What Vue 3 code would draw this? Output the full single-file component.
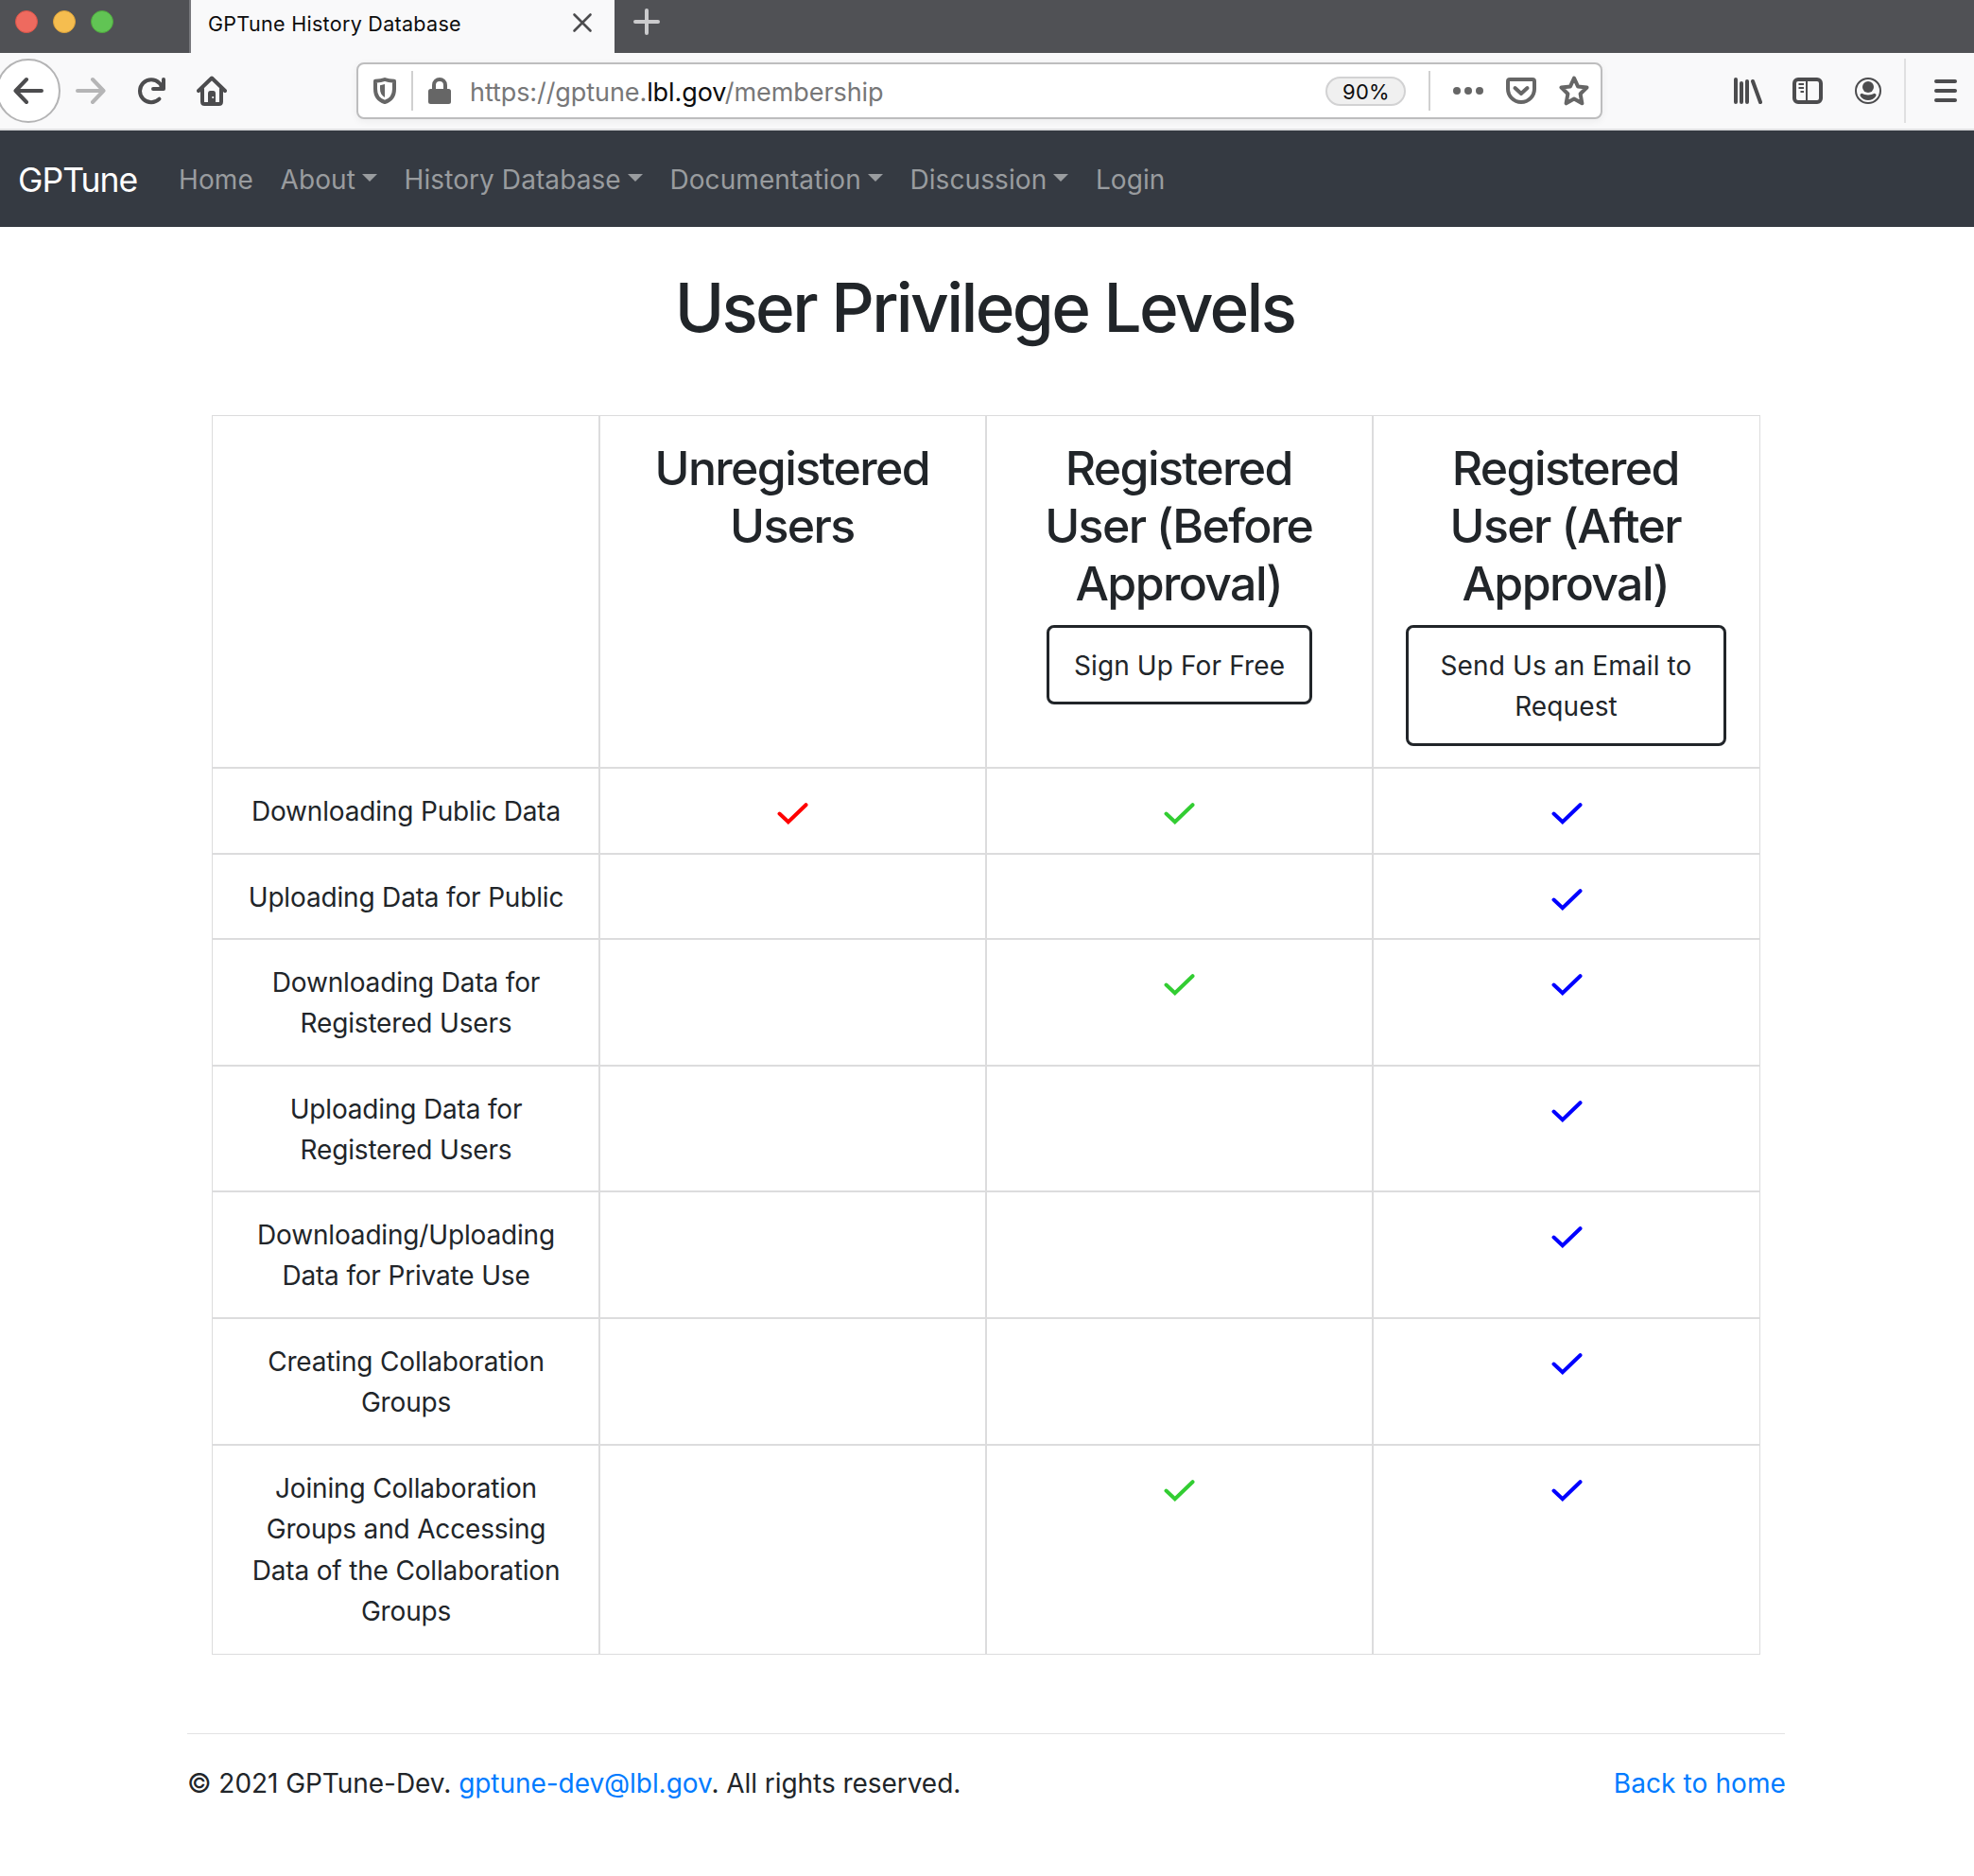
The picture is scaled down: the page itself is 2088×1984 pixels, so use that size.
<script setup>
const navItems = [
  { label: 'Home' },
  { label: 'About', menu: true },
  { label: 'History Database', menu: true },
  { label: 'Documentation', menu: true },
  { label: 'Discussion', menu: true },
  { label: 'Login' },
]

const levels = [
  { lines: ['Unregistered', 'Users'] },
  { lines: ['Registered', 'User (Before', 'Approval)'], action: ['Sign Up For Free'] },
  { lines: ['Registered', 'User (After', 'Approval)'], action: ['Send Us an Email to', 'Request'] },
]

const checkColors = ['#ff0000', '#32cd32', '#0000ff']

const privileges = [
  { lines: ['Downloading Public Data'], allowed: [true, true, true] },
  { lines: ['Uploading Data for Public'], allowed: [false, false, true] },
  { lines: ['Downloading Data for', 'Registered Users'], allowed: [false, true, true] },
  { lines: ['Uploading Data for', 'Registered Users'], allowed: [false, false, true] },
  { lines: ['Downloading/Uploading', 'Data for Private Use'], allowed: [false, false, true] },
  { lines: ['Creating Collaboration', 'Groups'], allowed: [false, false, true] },
  {
    lines: ['Joining Collaboration', 'Groups and Accessing', 'Data of the Collaboration', 'Groups'],
    allowed: [false, true, true],
  },
]
</script>

<template>
  <div class="window">
    <header class="tabbar">
      <div class="lights">
        <i class="light red"></i>
        <i class="light yellow"></i>
        <i class="light green"></i>
      </div>
      <div class="tab">
        <span class="tab-title">GPTune History Database</span>
        <svg class="tab-close" width="22" height="22" viewBox="0 0 22 22">
          <path d="M2.5 2.5 19.5 19.5M19.5 2.5 2.5 19.5" stroke="#4c4c4e" stroke-width="2.6" stroke-linecap="round" />
        </svg>
      </div>
      <svg class="tab-new" width="28" height="28" viewBox="0 0 28 28">
        <path d="M14 2V26M2 14H26" stroke="#cbcbcd" stroke-width="4" stroke-linecap="round" />
      </svg>
    </header>

    <div class="toolbar">
      <div class="back">
        <svg width="32" height="32" viewBox="0 0 32 32" fill="none" stroke="#4c4c4e" stroke-width="4" stroke-linecap="round" stroke-linejoin="round">
          <path d="M30 16H2.5M14 4 2.5 16 14 28" />
        </svg>
      </div>
      <svg class="forward" width="32" height="32" viewBox="0 0 32 32" fill="none" stroke="#b5b5b6" stroke-width="4" stroke-linecap="round" stroke-linejoin="round">
        <path d="M2 16H29.5M18 4 29.5 16 18 28" />
      </svg>
      <svg class="reload" width="32" height="32" viewBox="0 0 32 32" fill="none" stroke="#4c4c4e" stroke-width="4" stroke-linecap="round" stroke-linejoin="round">
        <path d="M24.5 24.7A12 12 0 1 1 24.5 7.8L28 12" />
        <path d="M29 4V14H18" />
        <path d="M29 7V14H22Z" fill="#4c4c4e" stroke="none" />
      </svg>
      <svg class="home" width="32" height="32" viewBox="0 0 32 32" fill="none" stroke="#4c4c4e" stroke-width="4" stroke-linecap="round" stroke-linejoin="round">
        <path d="M2 16 16 2.5 30 16" />
        <path d="M6 14V27.5Q6 30 8.500 30H23.500Q26 30 26 27.5V14" />
        <path d="M12 30V19Q12 16 14.500 16H17.500Q20 16 20 19V30Z" fill="#4c4c4e" stroke="none" />
        <circle cx="17.200" cy="23" r="1.100" fill="#f9f9fa" stroke="none" />
      </svg>

      <div class="urlbar">
        <svg class="shield" width="24" height="28" viewBox="0 0 24 28" fill="none">
          <path d="M12 2C15 3.200 18.500 3.600 22 3.800V12C22 19 18.500 24 12 26C5.500 24 2 19 2 12V3.800C5.500 3.600 9 3.200 12 2Z" stroke="#666" stroke-width="4" stroke-linejoin="round" />
          <path d="M12 7V21C8.500 19 7 16 7 12V8.200Z" fill="#666" />
        </svg>
        <i class="divider first"></i>
        <svg class="lock" width="24" height="28" viewBox="0 0 24 28" fill="none">
          <path d="M6 14V8A6 6 0 0 1 18 8V14" stroke="#666" stroke-width="4" />
          <rect y="12" width="24" height="16" rx="2.500" fill="#666" />
        </svg>
        <span class="url">https://gptune.<b>lbl.gov</b>/membership</span>
        <span class="zoom">90%</span>
        <i class="divider second"></i>
        <svg class="dots" width="32" height="8" viewBox="0 0 32 8" fill="#666">
          <circle cx="4" cy="4" r="4" /><circle cx="16" cy="4" r="4" /><circle cx="28" cy="4" r="4" />
        </svg>
        <svg class="pocket" width="32" height="28" viewBox="0 0 32 28" fill="none" stroke="#666" stroke-width="4" stroke-linecap="round" stroke-linejoin="round">
          <path d="M4 2H28Q30 2 30 4V12A14 14 0 0 1 2 12V4Q2 2 4 2Z" />
          <path d="M9.500 11 16 17 22.500 11" />
        </svg>
        <svg class="star" width="32" height="32" viewBox="0 0 32 32" fill="none" stroke="#666" stroke-width="4" stroke-linejoin="round">
          <path d="M16 2.500 20 11.400 29.500 12.500 22.600 19.200 24.400 29.300 16 24.500 7.600 29.300 9.400 19.200 2.500 12.500 12 11.400Z" />
        </svg>
      </div>

      <svg class="library" width="30" height="28" viewBox="0 0 30 28" stroke="#4c4c4e" stroke-width="4" stroke-linecap="round">
        <path d="M2 2V26M8 6V26M14 4V26M20 4 28 26" />
      </svg>
      <svg class="sidebar" width="32" height="28" viewBox="0 0 32 28" fill="none" stroke="#4c4c4e">
        <rect x="2" y="2" width="28" height="24" rx="4" stroke-width="4" />
        <path d="M15 3V25" stroke-width="2" />
        <path d="M6.500 7H12M6.500 11H12M8.500 15H12" stroke-width="2" />
      </svg>
      <svg class="account" width="28" height="28" viewBox="0 0 28 28" fill="#4c4c4e">
        <circle cx="14" cy="14" r="13" fill="none" stroke="#4c4c4e" stroke-width="2" />
        <circle cx="14" cy="10" r="6" />
        <path d="M7.500 16.800C9.500 18 11.500 18.500 14 18.500S18.500 18 20.500 16.800C22.500 17 23 18.500 22 20C20 22.500 17.500 24 14 24S8 22.500 6 20C5 18.500 5.500 17 7.500 16.800Z" />
      </svg>
      <i class="bar-divider"></i>
      <svg class="menu" width="24" height="24" viewBox="0 0 24 24" stroke="#4c4c4e" stroke-width="4" stroke-linecap="round">
        <path d="M2 2H22M2 12H22M2 22H22" />
      </svg>
    </div>

    <nav class="navbar">
      <a class="brand">GPTune</a>
      <a v-for="item in navItems" :key="item.label" class="nav-link">
        {{ item.label }}<i v-if="item.menu" class="caret"></i>
      </a>
    </nav>

    <main>
      <h1>User Privilege Levels</h1>
      <div class="grid">
        <div class="cell"></div>
        <div v-for="(level, i) in levels" :key="i" class="cell head">
          <h2><span v-for="line in level.lines" :key="line">{{ line }}</span></h2>
          <a v-if="level.action" class="btn" :class="{ wide: level.action.length > 1 }">
            <span v-for="line in level.action" :key="line">{{ line }}</span>
          </a>
        </div>
        <template v-for="(row, r) in privileges" :key="r">
          <div class="cell label"><span v-for="(line, l) in row.lines" :key="l">{{ line }}</span></div>
          <div v-for="(ok, c) in row.allowed" :key="c" class="cell mark">
            <svg v-if="ok" width="33" height="25" viewBox="0 0 33 25" fill="none" :stroke="checkColors[c]" stroke-width="4" stroke-linecap="round" stroke-linejoin="miter">
              <path d="M2.500 12.500 11.800 21.200 30.500 3.200" />
            </svg>
          </div>
        </template>
      </div>
      <footer>
        <p>© 2021 GPTune-Dev. <a>gptune-dev@lbl.gov</a>. All rights reserved.</p>
        <a class="home-link">Back to home</a>
      </footer>
    </main>
  </div>
</template>

<style>
body {
  margin: 0;
  background: #fff;
}
</style>

<style scoped>
.window,
.window * {
  box-sizing: border-box;
}
.window {
  width: 2088px;
  height: 1984px;
  overflow: hidden;
  background: #fff;
  color: #212529;
  font-family: Inter, "Liberation Sans", sans-serif;
  font-size: 28px;
  line-height: 43.6px;
}
svg {
  display: block;
  flex: none;
}
i {
  display: block;
  flex: none;
}

/* Tab strip */
.tabbar {
  display: flex;
  height: 56px;
  background: #505155;
}
.lights {
  display: flex;
  gap: 16px;
  width: 200px;
  padding: 11px 0 0 16px;
}
.light {
  width: 24px;
  height: 24px;
  border-radius: 50%;
}
.red {
  background: #ee6a5f;
  border: 1px solid #d95448;
}
.yellow {
  background: #f5bd4f;
  border: 1px solid #dca23a;
}
.green {
  background: #61c454;
  border: 1px solid #4fa73e;
}
.tab {
  display: flex;
  align-items: flex-start;
  width: 450px;
  border-left: 2px solid #77777b;
  background: #f9f9fa;
}
.tab-title {
  width: 403px;
  padding: 12px 0 0 18px;
  color: #0c0c0d;
  font-size: 21.5px;
  line-height: 26px;
  letter-spacing: 0.3px;
}
.tab-close {
  margin-top: 13px;
}
.tab-new {
  margin: 9px 0 0 20px;
}

/* Toolbar */
.toolbar {
  display: flex;
  align-items: center;
  height: 82px;
  border-bottom: 2px solid #e0e0e2;
  background: #f9f9fa;
}
.back {
  display: flex;
  align-items: center;
  justify-content: center;
  flex: none;
  width: 68px;
  height: 68px;
  margin-left: -4px;
  border: 2px solid #b4b4b5;
  border-radius: 50%;
  background: #fff;
}
.forward {
  margin-left: 16px;
}
.reload {
  margin-left: 32px;
}
.home {
  margin-left: 32px;
}
.urlbar {
  display: flex;
  align-items: center;
  flex: none;
  width: 1318px;
  height: 60px;
  margin-left: 137px;
  padding-left: 16px;
  border: 2px solid #bdbdbe;
  border-radius: 8px;
  background: #fff;
  box-shadow: 0 2px 8px rgba(0, 0, 0, 0.06);
}
.divider {
  width: 2px;
  height: 42px;
  background: #d0d0d0;
}
.divider.first {
  margin: 0 16px;
}
.url {
  width: 925px;
  padding: 4px 0 0 20px;
  color: #777778;
  font-size: 27px;
  letter-spacing: -0.08px;
  white-space: nowrap;
}
.url b {
  color: #0c0c0d;
  font-weight: 400;
}
.zoom {
  flex: none;
  width: 85px;
  height: 31px;
  padding-left: 1px;
  border: 2px solid #d2d2d3;
  border-radius: 16px;
  background: #f0f0f0;
  color: #0c0c0d;
  font-size: 22px;
  line-height: 28px;
  letter-spacing: 0.24px;
  text-align: center;
}
.divider.second {
  margin: 0 24px;
}
.pocket {
  margin-left: 24px;
}
.star {
  margin-left: 24px;
}
.library {
  margin-left: 139px;
}
.sidebar {
  margin-left: 32px;
}
.account {
  margin-left: 34px;
}
.bar-divider {
  width: 2px;
  height: 68px;
  margin-left: 24px;
  background: #e0e0e1;
}
.menu {
  margin-left: 30px;
}

/* Site navigation */
.navbar {
  display: flex;
  align-items: center;
  gap: 28.6px;
  height: 102px;
  padding: 3px 0 0 19px;
  background: #353a42;
}
.brand {
  width: 141.5px;
  color: #fff;
  font-size: 35.5px;
  letter-spacing: -1px;
}
.nav-link {
  display: flex;
  color: #999c9f;
  letter-spacing: 0.09px;
  white-space: nowrap;
}
.caret {
  width: 0;
  height: 0;
  margin: 15px 0 0 7px;
  border: 8px solid transparent;
  border-top-color: currentColor;
  border-bottom: 0;
}

/* Page */
main {
  width: 1690px;
  margin: 0 auto 0 198px;
}
h1 {
  height: 199px;
  margin: 0;
  padding: 42px 3px 0 0;
  font-size: 71px;
  font-weight: 500;
  line-height: 86px;
  letter-spacing: -2.650px;
  text-align: center;
}
.grid {
  display: grid;
  grid-template-columns: 410px 409px 409px 410px;
  grid-template-rows: 373px 91px 90px 134px 133px 134px 134px 222px;
  width: 1638px;
  margin-left: 26px;
}
.cell {
  display: flex;
  flex-direction: column;
  align-items: center;
  padding-top: 23.5px;
  border: 1px solid #dcdcdd;
  text-align: center;
}
.head {
  padding-top: 24.5px;
}
.head:nth-child(4) {
  padding-right: 1px;
}
.label {
  padding-left: 1px;
  letter-spacing: -0.17px;
}
.mark {
  padding-top: 35px;
}
h2 {
  margin: 0;
  padding-right: 1.5px;
  font-size: 50px;
  font-weight: 500;
  line-height: 61px;
  letter-spacing: -1.620px;
}
h2 span,
.btn span {
  display: block;
}
.btn {
  margin-top: 13px;
  padding: 19px 25.5px 16px;
  border: 3px solid #212529;
  border-radius: 8px;
  letter-spacing: 0.12px;
}
.btn.wide {
  width: 339px;
}
footer {
  display: flex;
  justify-content: space-between;
  margin-top: 83px;
  padding-top: 30.5px;
  border-top: 1px solid #e2e2e3;
}
footer p {
  margin: 0;
  letter-spacing: -0.05px;
}
footer a {
  color: #007bff;
}
.home-link {
  margin-right: -1px;
  letter-spacing: 0.1px;
}
</style>
